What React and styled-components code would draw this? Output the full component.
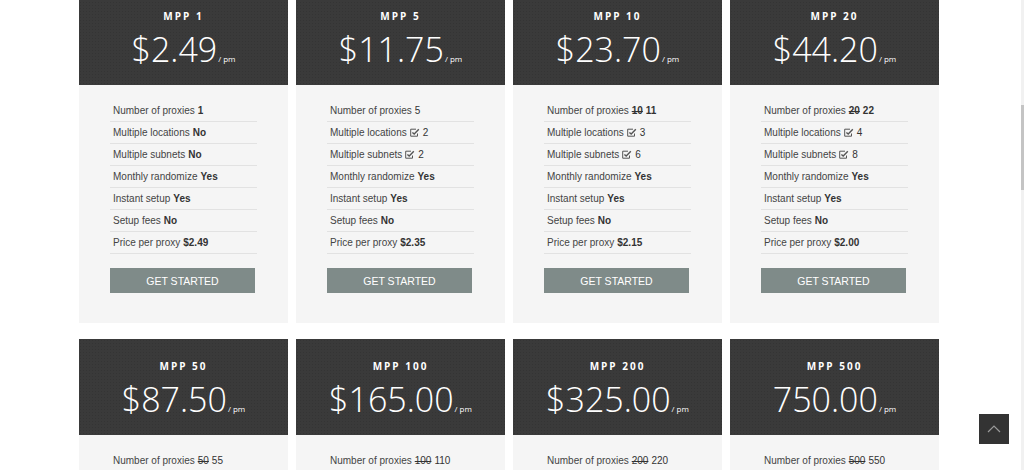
import React from "react";
import styled, { createGlobalStyle } from "styled-components";

const Global = createGlobalStyle`
  html, body { margin: 0; padding: 0; background: #ffffff; overflow: hidden; }
  body { font-family: "Liberation Sans", Arial, sans-serif; }
`;

const Page = styled.div`
  display: grid;
  grid-template-columns: repeat(4, 209px);
  column-gap: 8px;
  row-gap: 16px;
  padding-left: 79px;
  margin-top: -11px;
`;

const Card = styled.div`
  display: flex;
  flex-direction: column;
`;

const Header = styled.div`
  height: 96px;
  box-sizing: border-box;
  padding-top: 21px;
  background-color: #3a3a3a;
  background-image: radial-gradient(rgba(0, 0, 0, 0.1) 0.8px, transparent 0.9px);
  background-size: 3px 3px;
  color: #ffffff;
  text-align: center;
  font-family: "Open Sans", sans-serif;
`;

const Title = styled.div`
  font-size: 10px;
  line-height: 12px;
  font-weight: 700;
  letter-spacing: 2px;
`;

const Price = styled.div`
  margin-top: 7px;
  font-size: 34px;
  line-height: 41px;
  font-weight: 300;
  white-space: nowrap;
`;

const Per = styled.span`
  font-size: 8px;
  font-weight: 400;
  margin-left: 1px;
`;

const Body = styled.div`
  background: #f5f5f5;
  padding: 15px 31px 30px 31px;
  display: flex;
  flex-direction: column;
`;

const List = styled.ul`
  list-style: none;
  margin: 0;
  padding: 0;
`;

const Item = styled.li`
  height: 21px;
  line-height: 21px;
  border-bottom: 1px solid #e2e2e2;
  padding-left: 3px;
  font-size: 10px;
  color: #444444;
  white-space: nowrap;
  display: flex;
  align-items: center;
  gap: 3px;
`;

const Val = styled.span`
  color: #333333;
  font-weight: ${(p) => (p.$bold ? 700 : 400)};
  text-decoration: ${(p) => (p.$strike ? "line-through" : "none")};
`;

const Button = styled.button`
  margin-top: 14px;
  width: 145px;
  height: 25px;
  border: none;
  background: #7f8b89;
  color: #ffffff;
  font-family: "Liberation Sans", Arial, sans-serif;
  font-size: 10.5px;
  text-transform: uppercase;
  padding: 0;
  cursor: pointer;
`;

const ToTop = styled.div`
  position: fixed;
  right: 15px;
  bottom: 26px;
  width: 30px;
  height: 30px;
  background: #333333;
  display: flex;
  align-items: center;
  justify-content: center;
`;

const Track = styled.div`
  position: fixed;
  top: 0;
  right: 0;
  width: 3px;
  height: 100%;
  background: #f1f1f1;
`;

const Thumb = styled.div`
  margin-top: 105px;
  height: 85px;
  background: #c4c4c4;
`;

const Check = () => (
  <svg width="10" height="9" viewBox="0 0 10 9" fill="none" stroke="#555" strokeWidth="1">
    <path d="M7.5 5.5 V8.2 H0.7 V1.2 H6" />
    <path d="M2.4 4.4 L4.2 6 L8.8 1.2" strokeWidth="1.4" />
  </svg>
);

const plans = [
  { name: "MPP 1", price: "$2.49", proxies: [{ v: "1", b: true }], loc: "No", sub: "No", ppp: "$2.49" },
  { name: "MPP 5", price: "$11.75", proxies: [{ v: "5" }], loc: 2, sub: 2, ppp: "$2.35" },
  { name: "MPP 10", price: "$23.70", proxies: [{ v: "10", b: true, s: true }, { v: "11", b: true }], loc: 3, sub: 6, ppp: "$2.15" },
  { name: "MPP 20", price: "$44.20", proxies: [{ v: "20", b: true, s: true }, { v: "22", b: true }], loc: 4, sub: 8, ppp: "$2.00" },
  { name: "MPP 50", price: "$87.50", proxies: [{ v: "50", s: true }, { v: "55" }] },
  { name: "MPP 100", price: "$165.00", proxies: [{ v: "100", s: true }, { v: "110" }] },
  { name: "MPP 200", price: "$325.00", proxies: [{ v: "200", s: true }, { v: "220" }] },
  { name: "MPP 500", price: "750.00", proxies: [{ v: "500", s: true }, { v: "550" }] },
];

const Option = ({ label, value }) => (
  <Item>
    {label}
    {typeof value === "number" ? (
      <>
        <Check />
        <Val>{value}</Val>
      </>
    ) : (
      <Val $bold>{value}</Val>
    )}
  </Item>
);

export default function App() {
  return (
    <>
      <Global />
      <Page>
        {plans.map((p) => (
          <Card key={p.name}>
            <Header>
              <Title>{p.name}</Title>
              <Price>
                {p.price}
                <Per>/ pm</Per>
              </Price>
            </Header>
            <Body>
              <List>
                <Item>
                  Number of proxies
                  {p.proxies.map((x, i) => (
                    <Val key={i} $bold={x.b} $strike={x.s}>
                      {x.v}
                    </Val>
                  ))}
                </Item>
                <Option label="Multiple locations" value={p.loc ?? "No"} />
                <Option label="Multiple subnets" value={p.sub ?? "No"} />
                <Option label="Monthly randomize" value="Yes" />
                <Option label="Instant setup" value="Yes" />
                <Option label="Setup fees" value="No" />
                <Option label="Price per proxy" value={p.ppp ?? "$2.00"} />
              </List>
              <Button>Get Started</Button>
            </Body>
          </Card>
        ))}
      </Page>
      <ToTop>
        <svg width="14" height="8" viewBox="0 0 14 8" fill="none" stroke="#9a9a9a" strokeWidth="1.2">
          <path d="M1 7 L7 1 L13 7" />
        </svg>
      </ToTop>
      <Track>
        <Thumb />
      </Track>
    </>
  );
}
